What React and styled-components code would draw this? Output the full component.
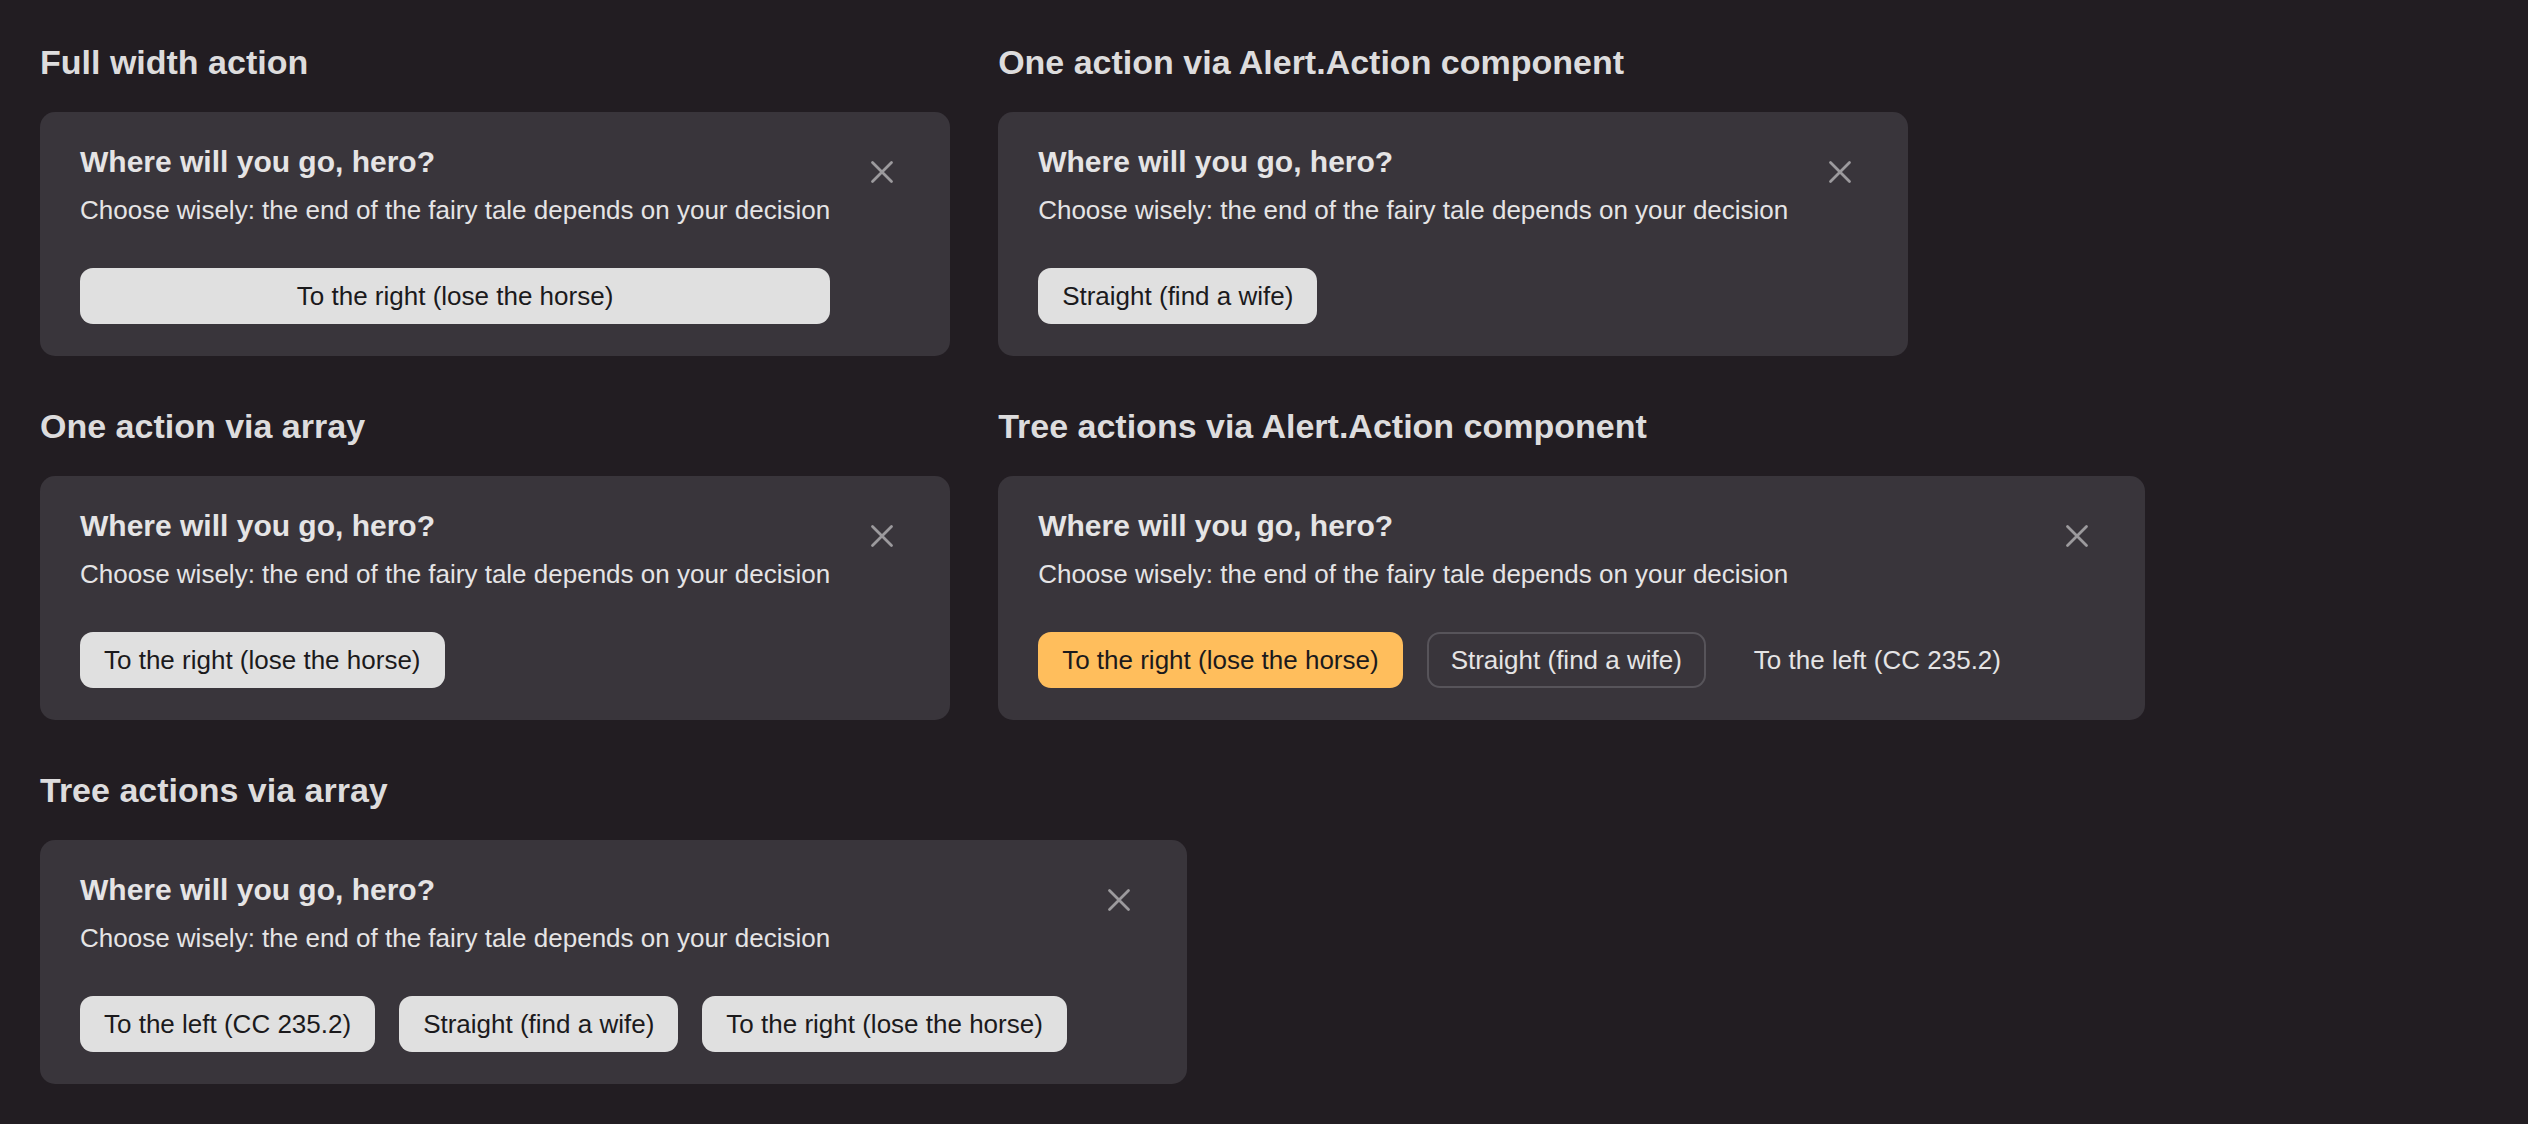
import React from "react";
import styled, { createGlobalStyle, css } from "styled-components";

const GlobalStyle = createGlobalStyle`
  html, body {
    margin: 0;
    padding: 0;
    background: #221d22;
  }
  body {
    font-family: "Liberation Sans", Arial, sans-serif;
    color: rgba(255, 255, 255, 0.85);
  }
  * { box-sizing: border-box; }
`;

const Page = styled.main`
  min-height: 100vh;
  padding: 42px 40px 40px;
  display: flex;
  flex-wrap: wrap;
  align-content: flex-start;
  column-gap: 48px;
  row-gap: 50px;
`;

const Section = styled.section`
  display: flex;
  flex-direction: column;
  align-items: flex-start;
`;

const Heading = styled.h2`
  margin: 0 0 30px;
  font-size: 34px;
  line-height: 40px;
  font-weight: 700;
  color: #dddcdd;
`;

const Card = styled.div`
  display: flex;
  gap: 24px;
  padding: 32px 40px;
  background: #39353b;
  border-radius: 15px;
`;

const Content = styled.div`
  display: flex;
  flex-direction: column;
  align-items: stretch;
`;

const Title = styled.h3`
  margin: 0;
  font-size: 30px;
  line-height: 36px;
  font-weight: 700;
  color: #e5e4e5;
`;

const Message = styled.p`
  margin: 12px 0 0;
  font-size: 26px;
  line-height: 36px;
  color: #e5e4e5;
  white-space: nowrap;
`;

const Actions = styled.div`
  margin-top: 40px;
  display: flex;
  gap: 24px;
`;

const views = {
  normal: css`
    background: #e0e0e0;
    color: #1b1a1c;
  `,
  action: css`
    background: #ffbe5c;
    color: #1b1a1c;
  `,
  outlined: css`
    background: transparent;
    color: #e5e4e5;
    box-shadow: inset 0 0 0 2px #57545a;
  `,
  flat: css`
    background: transparent;
    color: #e5e4e5;
  `,
};

const Button = styled.button`
  height: 56px;
  padding: 0 24px;
  border: none;
  border-radius: 13px;
  font-family: "Liberation Sans", Arial, sans-serif;
  font-size: 26px;
  line-height: 56px;
  white-space: nowrap;
  cursor: pointer;
  ${({ $view }) => views[$view || "normal"]}
  ${({ $wide }) => $wide && css`width: 100%;`}
`;

const Close = styled.button`
  flex: none;
  width: 56px;
  height: 56px;
  padding: 0;
  border: none;
  border-radius: 13px;
  background: transparent;
  color: #9c9a9d;
  display: flex;
  align-items: center;
  justify-content: center;
  cursor: pointer;
`;

const XIcon = () => (
  <svg width="24" height="24" viewBox="0 0 24 24" fill="none">
    <path
      d="M2.5 2.5 L21.5 21.5 M21.5 2.5 L2.5 21.5"
      stroke="currentColor"
      strokeWidth="2.8"
      strokeLinecap="round"
    />
  </svg>
);

const Alert = ({ actions, wide }) => (
  <Card>
    <Content>
      <Title>Where will you go, hero?</Title>
      <Message>Choose wisely: the end of the fairy tale depends on your decision</Message>
      <Actions>
        {actions.map((a) => (
          <Button key={a.text} $view={a.view} $wide={wide}>
            {a.text}
          </Button>
        ))}
      </Actions>
    </Content>
    <Close aria-label="Close">
      <XIcon />
    </Close>
  </Card>
);

const RIGHT = "To the right (lose the horse)";
const STRAIGHT = "Straight (find a wife)";
const LEFT = "To the left (CC 235.2)";

const sections = [
  { title: "Full width action", wide: true, actions: [{ text: RIGHT }] },
  { title: "One action via Alert.Action component", actions: [{ text: STRAIGHT }] },
  { title: "One action via array", actions: [{ text: RIGHT }] },
  {
    title: "Tree actions via Alert.Action component",
    actions: [
      { text: RIGHT, view: "action" },
      { text: STRAIGHT, view: "outlined" },
      { text: LEFT, view: "flat" },
    ],
  },
  {
    title: "Tree actions via array",
    actions: [{ text: LEFT }, { text: STRAIGHT }, { text: RIGHT }],
  },
];

export default function App() {
  return (
    <>
      <GlobalStyle />
      <Page>
        {sections.map((s) => (
          <Section key={s.title}>
            <Heading>{s.title}</Heading>
            <Alert actions={s.actions} wide={s.wide} />
          </Section>
        ))}
      </Page>
    </>
  );
}
